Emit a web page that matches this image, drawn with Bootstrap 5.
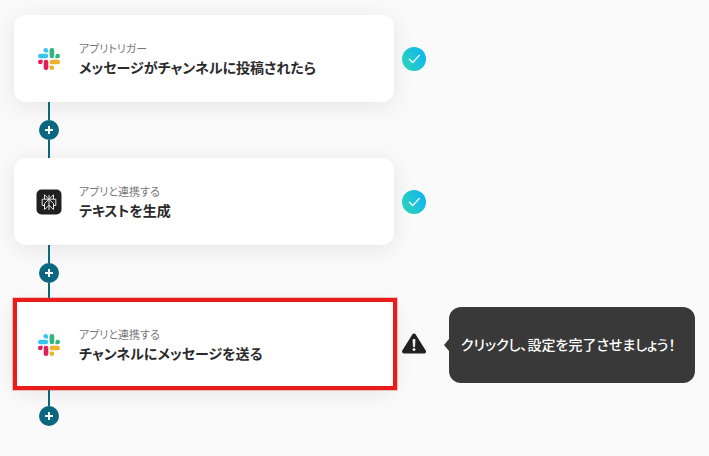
<!DOCTYPE html>
<html lang="ja">
<head>
<meta charset="utf-8">
<meta name="viewport" content="width=device-width, initial-scale=1">
<title>フロー</title>
<link href="https://cdn.jsdelivr.net/npm/bootstrap@5.3.0/dist/css/bootstrap.min.css" rel="stylesheet">
<style>
  body { background: #fafafa; color: #222; font-family: "Noto Sans CJK JP", sans-serif; font-feature-settings: "palt"; }
  .flow { padding: 15px 14px; }
  .step { gap: 8px; }
  .step-card { flex: 0 1 380px; min-width: 0; min-height: 87px; padding: 0 22px; gap: 17px; background: #fff; border: 0; border-radius: 12px; box-shadow: 0 4px 24px rgba(0,0,0,.09); color: inherit; font-feature-settings: inherit; }
  .app-icon { width: 26px; height: 26px; flex: none; }
  .step-kind { font-size: 11px; line-height: 16px; color: #777; }
  .step-name { font-size: 14px; line-height: 22px; font-weight: 700; color: #2a2a2a; }
  .highlight { position: absolute; inset: -3px -3px -2px -1px; border: 4px solid #e91b1b; box-shadow: 0 0 0 1px rgba(233,27,27,.25); pointer-events: none; }
  .status { width: 24px; height: 24px; flex: none; }
  .link-line { width: 70px; height: 56px; }
  .link-line::before, .link-line::after { content: ""; flex: 1; width: 2px; background: #0b6780; }
  .link-last::after { background: none; }
  .add-btn { width: 20px; height: 20px; background: #0b6780; }
  .hint { margin-left: 15px; width: 246px; min-height: 76px; padding: 0 12px 2px; border-radius: 12px; background: #393939; color: #fff; font-size: 14px; line-height: 22px; font-weight: 500; }
  .hint::before { content: ""; position: absolute; left: -5px; top: 50%; margin-top: -6px; border: 6px solid transparent; border-left: 0; border-right: 5px solid #393939; }
</style>
<script src="https://cdn.jsdelivr.net/npm/bootstrap@5.3.0/dist/js/bootstrap.bundle.min.js"></script>
</head>
<body>
<svg width="0" height="0" class="position-absolute" aria-hidden="true">
  <defs>
    <linearGradient id="teal" x1="0" y1=".8" x2="1" y2=".3"><stop offset="0" stop-color="#2bd5b8"/><stop offset="1" stop-color="#10b5f0"/></linearGradient>
    <symbol id="slack" viewBox="0 0 26 26">
      <g fill="#36c5f0"><path d="M9.700 2a2.300 2.300 0 0 1 2.300 2.300v2.300H9.700a2.300 2.300 0 0 1 0-4.600z"/><rect x="2" y="7.800" width="10.200" height="4.500" rx="2.200"/></g>
      <g fill="#2eb67d"><rect x="13.600" y="2" width="4.600" height="10.300" rx="2.200"/><path d="M24 10a2.300 2.300 0 0 1-2.300 2.300h-2.300V10a2.300 2.300 0 0 1 4.600 0z"/></g>
      <g fill="#ecb22e"><rect x="13.600" y="13.700" width="10.400" height="4.500" rx="2.200"/><path d="M15.900 24a2.300 2.300 0 0 1-2.300-2.300v-2.300h2.300a2.300 2.300 0 0 1 0 4.600z"/></g>
      <g fill="#e01e5a"><rect x="7.700" y="13.700" width="4.600" height="10.300" rx="2.200"/><path d="M2 16a2.300 2.300 0 0 1 2.300-2.300h2.300V16A2.300 2.300 0 0 1 2 16z"/></g>
    </symbol>
    <symbol id="check" viewBox="0 0 24 24"><circle cx="12" cy="12" r="12" fill="url(#teal)"/><path d="M7.300 12.200l3.400 3.400 6.600-7.200" fill="none" stroke="#fff" stroke-width="1.400" stroke-linecap="round" stroke-linejoin="round"/></symbol>
    <symbol id="plus" viewBox="0 0 20 20"><path d="M10 6v8M6 10h8" stroke="#fff" stroke-width="2"/></symbol>
  </defs>
</svg>
<main class="flow">
  <div class="step d-flex align-items-center">
    <button type="button" class="step-card d-flex align-items-center text-start">
      <svg class="app-icon" aria-hidden="true"><use href="#slack"/></svg>
      <span><span class="step-kind d-block">アプリトリガー</span><span class="step-name d-block">メッセージがチャンネルに投稿されたら</span></span>
    </button>
    <svg class="status" role="img" aria-label="完了"><use href="#check"/></svg>
  </div>
  <div class="link-line d-flex flex-column align-items-center">
    <button type="button" class="add-btn d-flex border-0 p-0 rounded-circle" aria-label="追加"><svg width="20" height="20"><use href="#plus"/></svg></button>
  </div>
  <div class="step d-flex align-items-center">
    <button type="button" class="step-card d-flex align-items-center text-start">
      <svg class="app-icon" viewBox="0 0 26 26" aria-hidden="true"><rect x=".5" y=".5" width="25" height="25" rx="5" fill="#202020"/><path d="M13 6v15M8.500 5.800L13 10.200l4.500-4.400v4.400M8.500 5.800v4.400M6.200 10.200h13.600v6.300h-2.300M6.200 10.200v6.300h2.300M13 10.200l-4.500 4.300v6L13 16.300l4.500 4.200v-6z" fill="none" stroke="#e4e4e4" stroke-width="1"/></svg>
      <span><span class="step-kind d-block">アプリと連携する</span><span class="step-name d-block">テキストを生成</span></span>
    </button>
    <svg class="status" role="img" aria-label="完了"><use href="#check"/></svg>
  </div>
  <div class="link-line d-flex flex-column align-items-center">
    <button type="button" class="add-btn d-flex border-0 p-0 rounded-circle" aria-label="追加"><svg width="20" height="20"><use href="#plus"/></svg></button>
  </div>
  <div class="step d-flex align-items-center">
    <button type="button" class="step-card d-flex align-items-center text-start position-relative">
      <svg class="app-icon" aria-hidden="true"><use href="#slack"/></svg>
      <span><span class="step-kind d-block">アプリと連携する</span><span class="step-name d-block">チャンネルにメッセージを送る</span></span>
      <span class="highlight"></span>
    </button>
    <svg class="status" viewBox="0 0 24 24" role="img" aria-label="警告"><path d="M12 2.500L22 18.500H2z" fill="#222" stroke="#222" stroke-width="4" stroke-linejoin="round"/><path d="M11 6.500h2l-.4 7.300h-1.200z" fill="#fff" stroke="#fff" stroke-width=".8" stroke-linejoin="round"/><circle cx="12" cy="16.600" r="1.400" fill="#fff"/></svg>
    <div class="hint d-flex align-items-center position-relative" role="tooltip">クリックし、設定を完了させましょう！</div>
  </div>
  <div class="link-line link-last d-flex flex-column align-items-center">
    <button type="button" class="add-btn d-flex border-0 p-0 rounded-circle" aria-label="追加"><svg width="20" height="20"><use href="#plus"/></svg></button>
  </div>
</main>
</body>
</html>
